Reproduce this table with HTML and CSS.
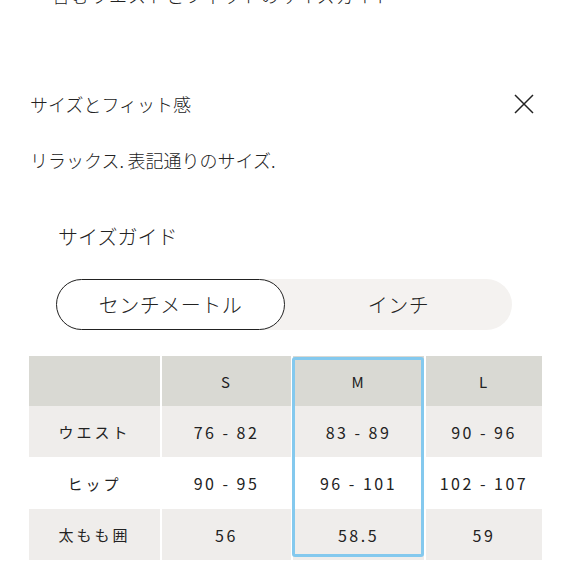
FILE: index.html
```html
<!DOCTYPE html>
<html lang="ja">
<head>
<meta charset="utf-8">
<link rel="stylesheet" href="styles.css">
</head>
<body>
<p class="top-cut">含むウエストとフィットのサイズガイド</p>
<div class="fit-header">
  <span>サイズとフィット感</span>
  <svg class="close" width="22" height="22" viewBox="0 0 22 22"><path d="M2 2L20 20M20 2L2 20" stroke="#222" stroke-width="1.5" fill="none"/></svg>
</div>
<p class="fit-desc">リラックス.&thinsp;表記通りのサイズ.</p>
<h2 class="guide-title">サイズガイド</h2>
<div class="toggle">
  <div class="opt active">センチメートル</div>
  <div class="opt">インチ</div>
</div>
<div class="table">
  <div class="cell head"></div><div class="cell head">S</div><div class="cell head">M</div><div class="cell head">L</div>
  <div class="cell shade label">ウエスト</div><div class="cell shade num">76 - 82</div><div class="cell shade num">83 - 89</div><div class="cell shade num">90 - 96</div>
  <div class="cell label">ヒップ</div><div class="cell num">90 - 95</div><div class="cell num">96 - 101</div><div class="cell num">102 - 107</div>
  <div class="cell shade label">太もも囲</div><div class="cell shade num">56</div><div class="cell shade num">58.5</div><div class="cell shade num">59</div>
  <div class="highlight"></div>
</div>
</body>
</html>
```
FILE: styles.css
```css
html, body {
  margin: 0;
  padding: 0;
  background: #fff;
}
body {
  font-family: "Noto Sans CJK JP", "Noto Sans", sans-serif;
  font-weight: 300;
  color: #222;
  width: 571px;
  height: 571px;
  overflow: hidden;
}
.top-cut {
  margin: -15px 0 0 52px;
  font-size: 18px;
  line-height: 20px;
  letter-spacing: 1px;
}
.fit-header {
  margin-top: 87px;
  padding: 0 36px 0 30px;
  display: flex;
  justify-content: space-between;
  align-items: center;
  font-size: 18px;
  line-height: 24px;
  height: 24px;
}
.close {
  display: block;
}
.fit-desc {
  margin: 32px 0 0 30px;
  font-size: 18px;
  line-height: 24px;
}
.guide-title {
  margin: 52px 0 0 58px;
  font-size: 20px;
  font-weight: 300;
  line-height: 26px;
}
.toggle {
  margin: 29px 0 0 56px;
  width: 456px;
  height: 51px;
  background: #f4f2f0;
  border-radius: 26px;
  display: flex;
}
.opt {
  flex: 1;
  display: flex;
  align-items: center;
  justify-content: center;
  font-size: 20px;
  letter-spacing: 0.5px;
}
.opt.active {
  flex: 0 0 229px;
  box-sizing: border-box;
  border: 1.6px solid #222;
  border-radius: 26px;
  background: #fff;
}
.table {
  position: relative;
  margin: 26px 0 0 29px;
  width: 513px;
  display: grid;
  grid-template-columns: 131px 129px 131px 116px;
  grid-template-rows: 50px 51px 52px 51px;
  column-gap: 2px;
}
.cell {
  display: flex;
  align-items: center;
  justify-content: center;
  font-size: 15px;
  font-weight: 400;
  letter-spacing: 2px;
}
.cell.head {
  background: #d9d9d3;
}
.cell.shade {
  background: #efedeb;
}
.cell.label {
  letter-spacing: 3px;
}
.cell.num {
  font-size: 16px;
  letter-spacing: 2.5px;
  white-space: pre;
}
.highlight {
  position: absolute;
  left: 263px;
  top: 1px;
  width: 132px;
  height: 200px;
  box-sizing: border-box;
  border: 3px solid #84c9ee;
  border-radius: 3px;
}
```
